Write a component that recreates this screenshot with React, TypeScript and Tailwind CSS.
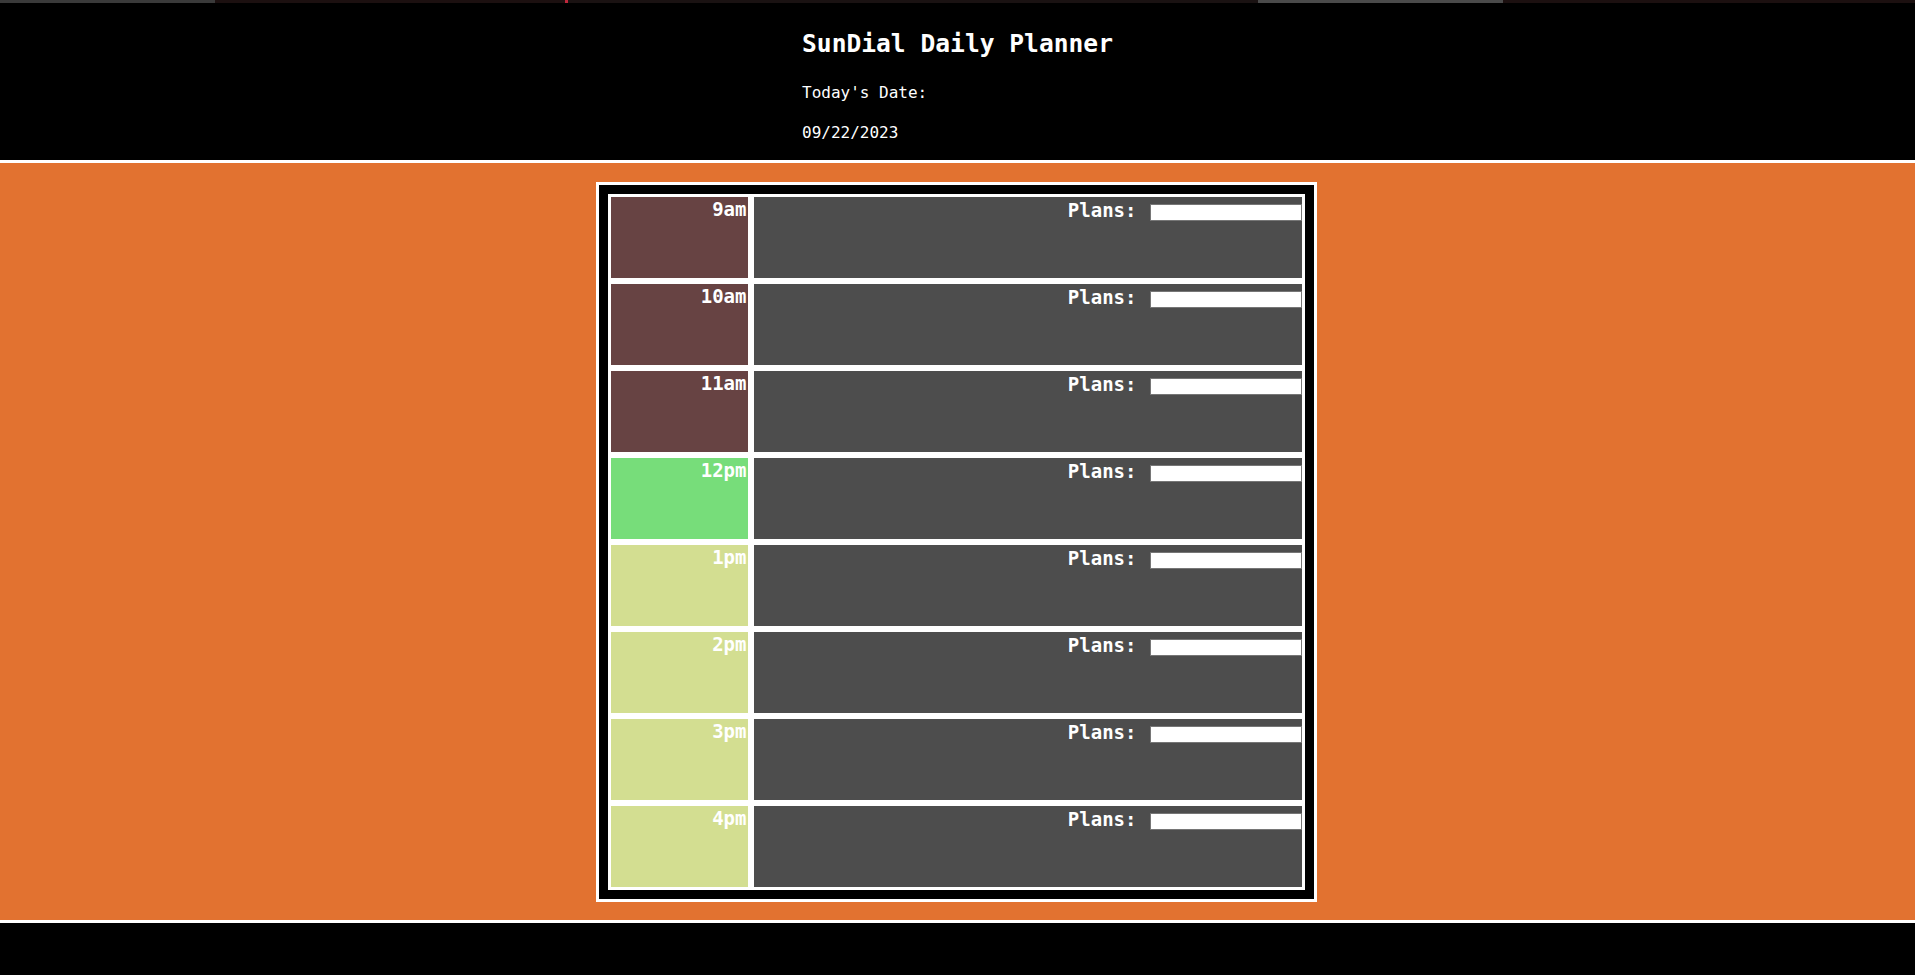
import React from "react";

type Slot = {
    label: string;
    tense: "past" | "present" | "future";
};

const SLOTS: Slot[] = [
    { label: "9am", tense: "past" },
    { label: "10am", tense: "past" },
    { label: "11am", tense: "past" },
    { label: "12pm", tense: "present" },
    { label: "1pm", tense: "future" },
    { label: "2pm", tense: "future" },
    { label: "3pm", tense: "future" },
    { label: "4pm", tense: "future" },
];

const tenseColor = {
    past: "bg-[#674343]",
    present: "bg-[#77dd7a]",
    future: "bg-[#d3de91]",
};

const mono = { fontFamily: '"DejaVu Sans Mono", "Liberation Mono", monospace' };

const HourRow = ({ slot }: { slot: Slot }) => {
    return (
        <div className="flex h-[87px]">
            <div className={`w-[143px] border-[3px] border-white ${tenseColor[slot.tense]} flex justify-end items-start`}>
                <span className="text-[19px] leading-[23px] font-bold text-white mt-[1px] mr-[1px]">{slot.label}</span>
            </div>
            <div className="w-[554px] border-[3px] border-white bg-[#4d4d4d] flex justify-end items-start">
                <label className="text-[19px] leading-[23px] font-bold text-white mt-[2px]">Plans:</label>
                <input
                    type="text"
                    className="ml-[13px] mt-[7px] w-[152px] h-[17px] bg-white border border-[#767676] outline-none"
                />
            </div>
        </div>
    );
};

export default function App() {
    return (
        <div className="min-h-screen flex flex-col bg-black" style={mono}>
            <header className="bg-black border-b-[3px] border-white">
                <div className="flex h-[3px]">
                    <div className="w-[215px] bg-[#3a3a3a]" />
                    <div className="w-[350px] bg-[#1c1010]" />
                    <div className="w-[3px] bg-[#c0283c]" />
                    <div className="w-[690px] bg-[#1a1212]" />
                    <div className="w-[245px] bg-[#4a4a4a]" />
                    <div className="flex-1 bg-[#1c1010]" />
                </div>
                <div className="mx-auto w-fit pt-[26px] pb-[17px] text-white">
                    <h1 className="text-[24.6px] leading-[30px] font-bold">SunDial Daily Planner</h1>
                    <p className="text-[16px] leading-[20px] mt-[24px]">Today's Date:</p>
                    <p className="text-[16px] leading-[20px] mt-[20px]">09/22/2023</p>
                </div>
            </header>
            <main className="bg-[#e27230] pt-[19px] pb-[18px] pr-[3px] border-b-[3px] border-white">
                <div className="mx-auto w-[721px] border-[3px] border-white bg-black p-[9px]">
                    {SLOTS.map(slot => (
                        <HourRow key={slot.label} slot={slot} />
                    ))}
                </div>
            </main>
            <footer className="flex-1 bg-black" />
        </div>
    );
}
